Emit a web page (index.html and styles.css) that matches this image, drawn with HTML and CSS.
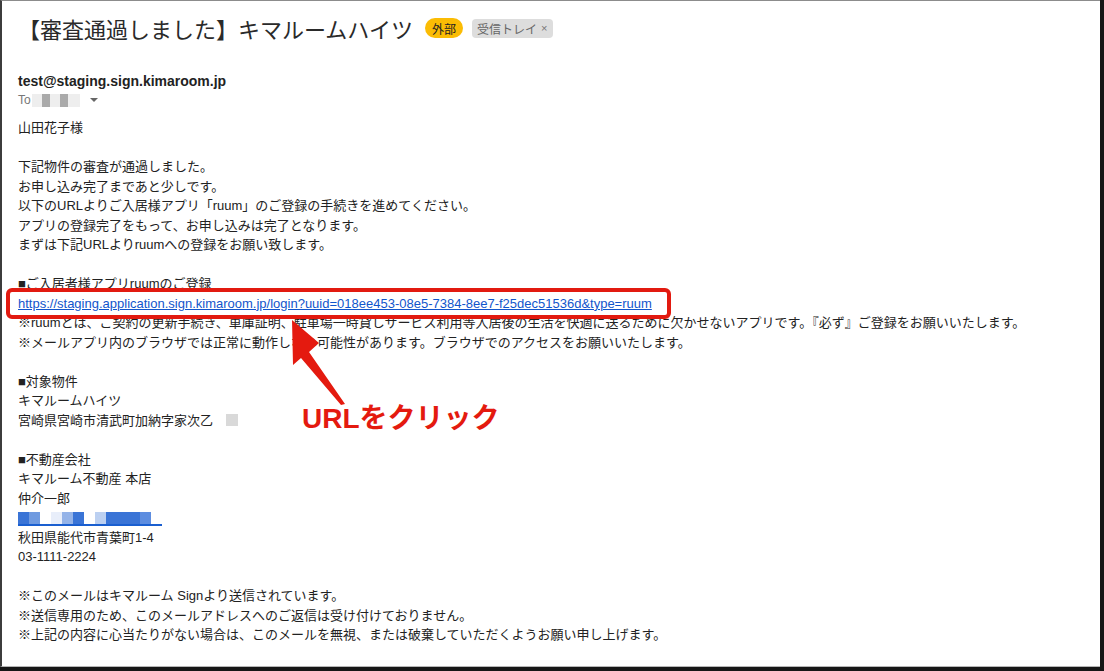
FILE: index.html
```html
<!DOCTYPE html>
<html lang="ja">
<head>
    <meta charset="UTF-8">
    <meta name="viewport" content="width=device-width, initial-scale=1.0">
    <title>【審査通過しました】キマルームハイツ</title>
    <link rel="stylesheet" href="styles.css">
</head>
<body>
    <div class="mail">
        <div class="subject">
            <h1 class="subject-title">【審査通過しました】キマルームハイツ</h1>
            <span class="label label-external">外部</span>
            <span class="label label-inbox">受信トレイ <span class="label-close">×</span></span>
        </div>

        <div class="sender">
            <div class="sender-address">test@staging.sign.kimaroom.jp</div>
            <div class="recipient">
                <span class="recipient-to">To</span>
                <span class="redacted">
                    <span class="px px-a"></span><span class="px px-b"></span><span class="px px-a"></span><span class="px px-b"></span><span class="px px-a"></span>
                </span>
                <span class="caret"></span>
            </div>
        </div>

        <div class="mail-body">
            <p>山田花子様</p>

            <p>
                下記物件の審査が通過しました。<br>
                お申し込み完了まであと少しです。<br>
                以下のURLよりご入居様アプリ「ruum」のご登録の手続きを進めてください。<br>
                アプリの登録完了をもって、お申し込みは完了となります。<br>
                まずは下記URLよりruumへの登録をお願い致します。
            </p>

            <p>
                ■ご入居者様アプリruumのご登録<br>
                <span class="link-box"><a href="#">https://staging.application.sign.kimaroom.jp/login?uuid=018ee453-08e5-7384-8ee7-f25dec51536d&amp;type=ruum</a></span><br>
                ※ruumとは、ご契約の更新手続き、車庫証明、駐車場一時貸しサービス利用等入居後の生活を快適に送るために欠かせないアプリです。『必ず』ご登録をお願いいたします。<br>
                ※メールアプリ内のブラウザでは正常に動作しない可能性があります。ブラウザでのアクセスをお願いいたします。
            </p>

            <p>
                ■対象物件<br>
                キマルームハイツ<br>
                宮崎県宮崎市清武町加納字家次乙<span class="redacted-square"></span>
            </p>

            <p>
                ■不動産会社<br>
                キマルーム不動産 本店<br>
                仲介一郎<br>
                <a href="#" class="redacted-link"><span class="b1"></span><span class="b2"></span><span class="b0"></span><span class="b3"></span><span class="b4"></span><span class="b1"></span><span class="b0"></span><span class="b5"></span><span class="b1 wide"></span><span class="b6"></span><span class="b0"></span></a><br>
                秋田県能代市青葉町1-4<br>
                03-1111-2224
            </p>

            <p>
                ※このメールはキマルーム Signより送信されています。<br>
                ※送信専用のため、このメールアドレスへのご返信は受け付けておりません。<br>
                ※上記の内容に心当たりがない場合は、このメールを無視、または破棄していただくようお願い申し上げます。
            </p>
        </div>

        <svg class="arrow" width="70" height="95" viewBox="0 0 70 95">
            <polygon points="9,7 36,30 26,39 62,91 58,92 18,45 10,52" fill="#e41a0f"/>
        </svg>
        <div class="callout">URLをクリック</div>
    </div>
</body>
</html>
```

FILE: styles.css
```css
* {
    margin: 0;
    padding: 0;
    box-sizing: border-box;
}

body {
    background: #161616;
    width: 1104px;
    height: 671px;
    overflow: hidden;
    font-family: 'Liberation Sans', 'Noto Sans CJK JP', sans-serif;
    color: #222222;
}

.mail {
    position: relative;
    width: 1100px;
    height: 667px;
    background: #ffffff;
    border-top: 1px solid #8c8c8c;
    border-left: 2px solid #3c3c3c;
    border-bottom: 1px solid #b5b5b5;
    padding: 0 16px;
}

/* subject */

.subject {
    display: flex;
    align-items: center;
    height: 54px;
}

.subject-title {
    font-size: 22px;
    font-weight: 400;
    color: #2a2a2a;
    margin-right: 12px;
}

.label {
    display: inline-flex;
    align-items: center;
    font-size: 12px;
    height: 19px;
    padding: 0 7px;
}

.label-external {
    background: #fbbc04;
    color: #222222;
    border-radius: 10px;
    height: 20px;
    margin-right: 9px;
}

.label-inbox {
    background: #dddddd;
    color: #666666;
    border-radius: 4px;
    padding: 0 6px 0 5px;
}

.label-close {
    font-size: 11px;
    margin-left: 4px;
    color: #777777;
}

/* sender */

.sender {
    margin-top: 16px;
}

.sender-address {
    font-size: 14px;
    font-weight: 700;
    line-height: 20px;
    color: #222222;
}

.recipient {
    display: flex;
    align-items: center;
    height: 18px;
    font-size: 12px;
    color: #777777;
}

.redacted {
    display: flex;
    margin-left: 1px;
}

.px {
    width: 9px;
    height: 13px;
}

.px-a {
    background: #eeeeee;
    width: 10px;
}

.px-b {
    background: #aaaaaa;
    width: 8px;
}

.redacted .px:last-child {
    width: 12px;
}

.caret {
    width: 0;
    height: 0;
    margin-left: 10px;
    border-left: 4px solid transparent;
    border-right: 4px solid transparent;
    border-top: 4px solid #666666;
}

/* body */

.mail-body {
    margin-top: 9px;
    font-size: 13px;
    line-height: 19.5px;
    color: #222222;
}

.mail-body p {
    margin-bottom: 19.5px;
}

.mail-body a {
    color: #1155cc;
}

.link-box {
    position: relative;
    display: inline-block;
}

.link-box::after {
    content: '';
    position: absolute;
    top: -6px;
    bottom: -6px;
    left: -12px;
    right: -19px;
    border: 4px solid #e21a10;
    border-radius: 6px;
}

.redacted-square {
    display: inline-block;
    width: 12px;
    height: 12px;
    margin-left: 13px;
    vertical-align: -1px;
    background: #d9d9d9;
}

.redacted-link {
    display: inline-flex;
    vertical-align: -2px;
    border-bottom: 2px solid #1a5fd0;
}

.redacted-link span {
    width: 11px;
    height: 12px;
}

.redacted-link .wide {
    width: 34px;
}

.b0 { background: #ffffff; }
.b1 { background: #3a74d6; }
.b2 { background: #6f9ae0; }
.b3 { background: #e8eefa; }
.b4 { background: #94b3e8; }
.b5 { background: #bcd0f1; }
.b6 { background: #5d8de0; }

/* annotation */

.arrow {
    position: absolute;
    left: 281px;
    top: 312px;
}

.callout {
    position: absolute;
    left: 300px;
    top: 403px;
    font-size: 28px;
    line-height: 30px;
    font-weight: 700;
    color: #e41a0f;
    white-space: nowrap;
}
```
